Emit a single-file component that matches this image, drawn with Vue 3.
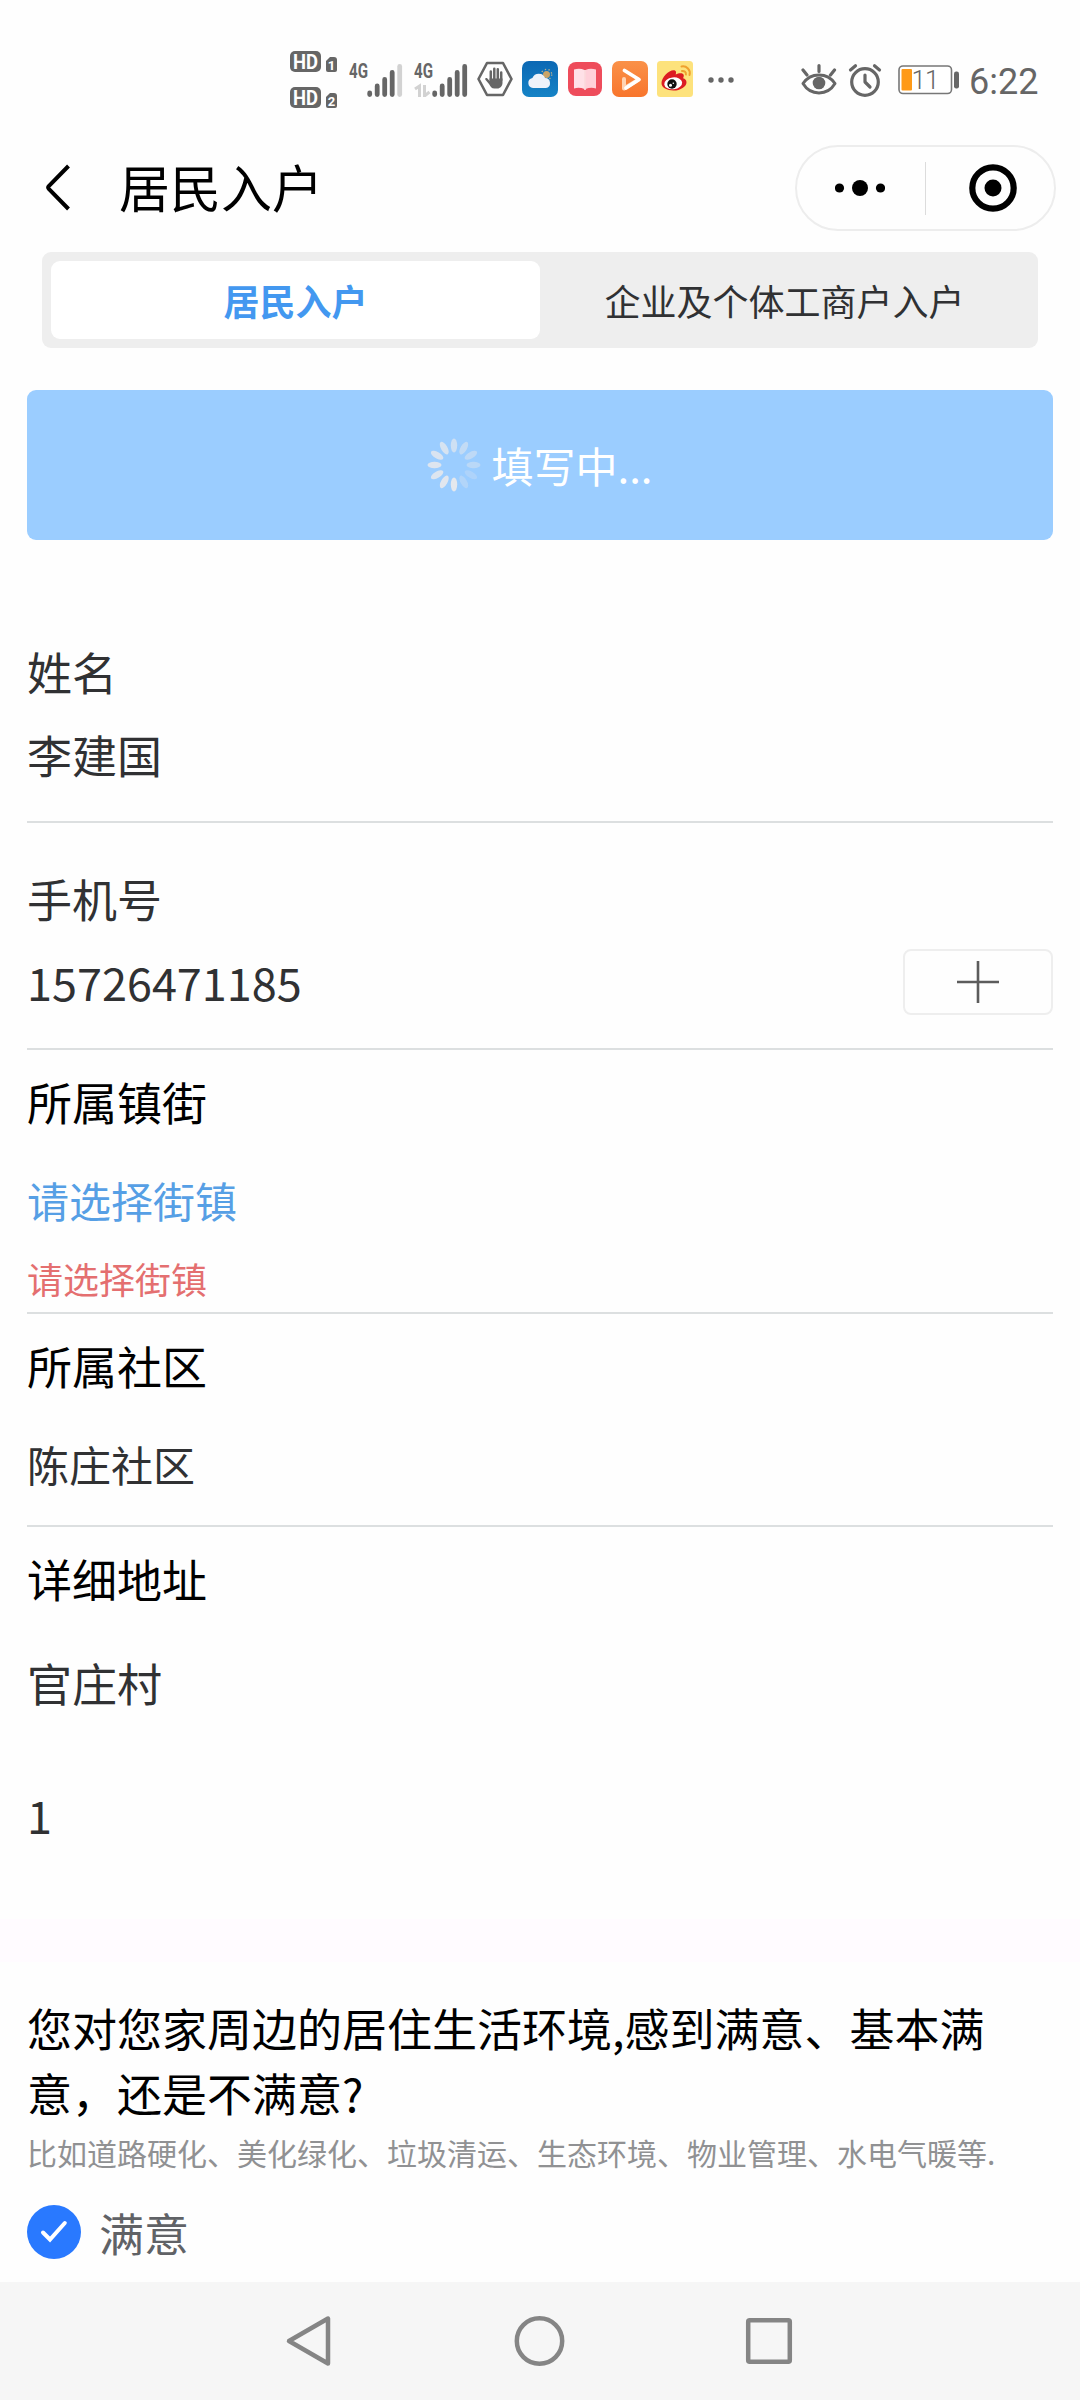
<template>
  <div class="page">
    <div class="status-bar">
      <!-- HD 1 / HD 2 -->
      <svg class="hd" width="50" height="60" viewBox="0 0 50 60">
        <g v-for="n in 2" :key="n" :transform="`translate(0 ${(n - 1) * 36})`">
          <rect x="0" y="1" width="31" height="21" rx="5" fill="#666" />
          <text x="3" y="18.500" font-size="20" font-weight="700" textLength="25" lengthAdjust="spacingAndGlyphs" fill="#fff">HD</text>
          <path d="M36 11l4-4h4q3 0 3 3v10q0 2-2 2h-7q-2 0-2-2z" fill="#666" />
          <text x="37.800" y="19.500" font-size="13" font-weight="700" fill="#fff">{{ n }}</text>
        </g>
      </svg>

      <svg class="signal" width="54" height="42" viewBox="0 -6 54 42">
        <text x="0" y="17" font-size="21" font-weight="700" textLength="19" lengthAdjust="spacingAndGlyphs" fill="#666">4G</text>
        <g stroke-width="4.8" stroke-linecap="round" stroke="#666">
          <path d="M20.7 32v1.6M28.2 25v8.6M35.7 18.5v15M43.2 11.5v22" />
          <path d="M50.7 5.5v28" stroke="#d2d2d2" />
        </g>
      </svg>

      <svg class="signal second" width="54" height="42" viewBox="0 -6 54 42">
        <text x="0" y="17" font-size="21" font-weight="700" textLength="19" lengthAdjust="spacingAndGlyphs" fill="#666">4G</text>
        <path d="M1 28l4.500-3v11M10.500 24v11l5-4" fill="none" stroke="#d2d2d2" stroke-width="3" />
        <g stroke-width="4.800" stroke-linecap="round" stroke="#666">
          <path d="M20.700 32v1.600M28.200 25v8.600M35.700 18.500v15M43.200 11.500v22M50.700 5.500v28" />
        </g>
      </svg>

      <svg class="hex" width="36" height="36" viewBox="0 0 36 36">
        <path d="M10 2h16l8.500 16-8.500 16H10L1.500 18z" fill="none" stroke="#666" stroke-width="2.600" stroke-linejoin="round" />
        <path d="M13.800 19V10.500M17.300 18V7.800M20.800 18V8.300M24.200 19V11.500" stroke="#666" stroke-width="2.500" stroke-linecap="round" />
        <path d="M12.500 17.500h13V22c0 3-2.500 5.500-5 5.500h-3c-3 0-4-2-5.500-4.500L8.400 18.700c-.8-1.500 1-2.200 2-1.200l2.300 2.500z" fill="#666" />
      </svg>

      <svg class="app weather" width="36" height="36" viewBox="0 0 36 36">
        <defs>
          <linearGradient id="sky" x1="0" y1="0" x2="0" y2="1">
            <stop offset="0" stop-color="#0c68b4" />
            <stop offset="1" stop-color="#1583c6" />
          </linearGradient>
        </defs>
        <rect width="36" height="36" rx="7" fill="url(#sky)" />
        <circle cx="24.500" cy="13.500" r="5.200" fill="none" stroke="#b5ae92" stroke-width="1.300" stroke-dasharray="1.300 2.400" />
        <circle cx="24.500" cy="13.500" r="3.500" fill="#c9a468" />
        <path d="M11 27a5 5 0 0 1-.6-9.900 6.800 6.800 0 0 1 12.700 0A5 5 0 0 1 24 27z" fill="#edf2fa" />
      </svg>

      <svg class="app book" width="34" height="34" viewBox="0 0 34 34">
        <rect width="34" height="34" rx="8" fill="#ee4c5b" />
        <path d="M6 7.500q6-1.500 10.500.5v19q-5-2-10.500-.6z" fill="#ffe1e7" />
        <path d="M28 7.500q-6-1.500-10.500.5v19q5-2 10.500-.6z" fill="#ffd0d9" />
        <path d="M17 8v20" stroke="#fff" stroke-width="1.300" />
      </svg>

      <svg class="app video" width="36" height="36" viewBox="0 0 36 36">
        <defs>
          <linearGradient id="orange" x1="0" y1="0" x2="0" y2="1">
            <stop offset="0" stop-color="#fa9148" />
            <stop offset="1" stop-color="#f8752c" />
          </linearGradient>
        </defs>
        <rect width="36" height="36" rx="7" fill="url(#orange)" />
        <path d="M12 18v9.500l14-8.500" fill="none" stroke="#ffd3b3" stroke-width="4" stroke-linejoin="round" stroke-linecap="round" />
        <path d="M12.500 9.500L27 18.500l-13 8.500" fill="none" stroke="#fff" stroke-width="3.800" stroke-linejoin="round" stroke-linecap="round" />
      </svg>

      <svg class="app weibo" width="36" height="36" viewBox="0 0 36 36">
        <rect width="36" height="36" rx="3.500" fill="#fde27c" />
        <path d="M4.500 22C4.500 16 13 8 17.500 9.300c2 .6 1.700 2.700 1.200 4.200 3-1.500 7.500-2 8 .5.300 1.300-.3 2.300-.6 3.200 2 .6 3.400 1.800 3.400 4 0 4.500-6 8.300-13 8.300-6.500 0-12-2.800-12-7.500z" fill="#dc1c22" />
        <ellipse cx="16.200" cy="22.300" rx="9" ry="5.900" transform="rotate(-7 16.200 22.300)" fill="#fff" />
        <circle cx="15" cy="23" r="4.700" fill="#111" />
        <circle cx="13.500" cy="24.200" r="1.500" fill="#fff" />
        <circle cx="16.300" cy="22.300" r=".8" fill="#fff" />
        <path d="M24.500 5.500c5-1 9.500 3.500 8 8.500M25 10c2.500-.3 4.200 1.200 3.900 3.500" fill="none" stroke="#efa12e" stroke-width="2" stroke-linecap="round" />
      </svg>

      <svg class="more" width="26" height="6" viewBox="0 0 26 6" fill="#666">
        <circle cx="3" cy="3" r="2.700" />
        <circle cx="13" cy="3" r="2.700" />
        <circle cx="23" cy="3" r="2.700" />
      </svg>

      <svg class="eye" width="36" height="34" viewBox="0 0 36 34" fill="none" stroke="#666" stroke-linecap="round">
        <path d="M2 20.500C9.500 9 26.500 9 34 20.500 26.500 33 9.500 33 2 20.500z" stroke-width="3" stroke-linejoin="round" />
        <path d="M18 2.500v6M2 7l4 5M33.500 7l-4 5" stroke-width="3.200" />
        <circle cx="18" cy="20" r="6.300" fill="#666" stroke="none" />
      </svg>

      <svg class="alarm" width="34" height="36" viewBox="0 0 34 36" fill="none" stroke="#666" stroke-linecap="round" stroke-linejoin="round">
        <circle cx="17" cy="20" r="13.300" stroke-width="3.200" />
        <path d="M17 13v7l5 5" stroke-width="3.200" />
        <path d="M2.500 8L7.500 3.800M31.500 8L26.500 3.800" stroke-width="3.200" />
      </svg>

      <svg class="battery" width="62" height="30" viewBox="0 0 62 30">
        <rect x="1" y="1" width="52.500" height="27.500" rx="4" fill="#fff" stroke="#777" stroke-width="1.600" />
        <rect x="3.500" y="4" width="10.500" height="21.500" rx="1" fill="#ff9a17" />
        <text x="13.500" y="24" font-family="Roboto" font-weight="300" font-size="26" textLength="28" fill="#666">11</text>
        <rect x="56" y="6.500" width="5" height="17" rx="2.200" fill="#666" />
      </svg>
      <span class="time">6:22</span>
    </div>

    <div class="nav-bar">
      <svg class="back" width="26" height="50" viewBox="0 0 26 50">
        <path d="M23.500 3L3.800 23.200q-1.200 1.300 0 2.600L23.500 46" fill="none" stroke="#000" stroke-width="4" />
      </svg>
      <h1 class="title">{{ title }}</h1>
      <div class="capsule">
        <svg class="menu" width="50" height="16" viewBox="0 0 50 16">
          <circle cx="4.500" cy="8" r="4.600" />
          <circle cx="25" cy="8" r="8" />
          <circle cx="45.500" cy="8" r="4.600" />
        </svg>
        <span class="divider"></span>
        <svg class="target" width="48" height="48" viewBox="0 0 48 48">
          <circle cx="24" cy="24" r="20.700" fill="none" stroke="#000" stroke-width="6.200" />
          <circle cx="24" cy="24" r="8.500" />
        </svg>
      </div>
    </div>

    <div class="tabs">
      <div
        v-for="(tab, i) in tabs"
        :key="tab"
        class="tab"
        :class="{ active: current === i }"
        @click="current = i"
      >{{ tab }}</div>
    </div>

    <div class="submit">
      <svg class="spinner" width="54" height="54" viewBox="-27 -27 54 54">
        <ellipse
          v-for="n in 12"
          :key="n"
          cx="0"
          cy="-19.500"
          rx="3.200"
          ry="7"
          fill="#e9e9ec"
          :opacity="petals[n - 1]"
          :transform="`rotate(${(n - 1) * 30})`"
        />
      </svg>
      <span>填写中...</span>
    </div>

    <div class="form">
      <div class="field name">
        <div class="label">姓名</div>
        <div class="value">{{ form.name }}</div>
      </div>

      <div class="field phone">
        <div class="label">手机号</div>
        <div class="row">
          <div class="value">{{ form.phone }}</div>
          <div class="add">
            <svg width="42" height="42" viewBox="0 0 42 42">
              <path d="M21 0v42M0 21h42" stroke="#5c5c5c" stroke-width="2.600" />
            </svg>
          </div>
        </div>
      </div>

      <div class="field street">
        <div class="label dark">所属镇街</div>
        <div class="value picker">请选择街镇</div>
        <div class="error">请选择街镇</div>
      </div>

      <div class="field community">
        <div class="label dark">所属社区</div>
        <div class="value small">{{ form.community }}</div>
      </div>

      <div class="field address">
        <div class="label dark">详细地址</div>
        <div class="value">{{ form.village }}</div>
        <div class="value number">{{ form.number }}</div>
      </div>
    </div>

    <div class="gap"></div>

    <div class="survey">
      <div class="question">您对您家周边的居住生活环境,感到满意、基本满意，还是不满意?</div>
      <div class="hint">比如道路硬化、美化绿化、垃圾清运、生态环境、物业管理、水电气暖等.</div>
      <div class="option">
        <svg width="54" height="54" viewBox="0 0 54 54">
          <circle cx="27" cy="27" r="27" fill="#2979ff" />
          <path d="M16 27.500l7 7L37.800 18" fill="none" stroke="#fff" stroke-width="4" stroke-linecap="round" />
        </svg>
        <span>满意</span>
      </div>
    </div>

    <div class="system-nav">
      <svg width="50" height="56" viewBox="0 0 50 56">
        <path d="M44 5.500v45L5 28z" />
      </svg>
      <svg width="56" height="56" viewBox="0 0 56 56">
        <circle cx="29.500" cy="28" r="22.700" />
      </svg>
      <svg width="56" height="56" viewBox="0 0 56 56">
        <rect x="7.200" y="7.200" width="41.600" height="41.600" rx="1.500" />
      </svg>
    </div>
  </div>
</template>

<script setup>
import { ref } from 'vue';

const title = '居民入户';
const tabs = ['居民入户', '企业及个体工商户入户'];
const current = ref(0);

const form = ref({
  name: '李建国',
  phone: '15726471185',
  community: '陈庄社区',
  village: '官庄村',
  number: '1',
});

// độ mờ của từng cánh, theo chiều kim đồng hồ
const petals = [0.65, 0.5, 0.45, 0.4, 0.25, 0.3, 0.95, 0.9, 0.85, 0.85, 0.8, 0.75];
</script>

<style>
body {
  margin: 0;
  background: #fff;
}
</style>

<style scoped>
.page {
  display: flex;
  flex-direction: column;
  width: 1080px;
  height: 2400px;
  overflow: hidden;
  background: #fefefe;
  color: #303133;
  font-family: "Noto Sans CJK SC", sans-serif;
}
svg {
  display: block;
  flex-shrink: 0;
}

/* status bar */
.status-bar {
  display: flex;
  align-items: flex-start;
  box-sizing: border-box;
  height: 130px;
  padding: 50px 0 0 290px;
}
.status-bar text {
  font-family: Roboto, sans-serif;
}
.signal {
  margin: 5px 0 0 9px;
}
.signal.second {
  margin-left: 11px;
}
.hex {
  margin: 11px 0 0 9px;
}
.app {
  margin: 11px 0 0 9px;
}
.book {
  margin: 12px 0 0 10px;
}
.video {
  margin-left: 10px;
}
.more {
  margin: 27px 0 0 15px;
}
.eye {
  margin: 13px 0 0 67px;
}
.alarm {
  margin: 12px 0 0 11px;
}
.battery {
  margin: 15px 0 0 16px;
}
.time {
  margin: 11px 0 0 9px;
  font-family: Roboto, sans-serif;
  font-size: 36px;
  line-height: 42px;
  color: #666;
}

/* title */
.nav-bar {
  display: flex;
  align-items: center;
  box-sizing: border-box;
  height: 116px;
  padding: 0 24px 0 45px;
}
.title {
  flex: 1;
  margin: 0 0 5px 48px;
  font-size: 51px;
  line-height: 70px;
  font-weight: 400;
  color: #000;
}
.capsule {
  display: flex;
  align-items: center;
  box-sizing: border-box;
  width: 261px;
  height: 86px;
  padding-left: 38px;
  border: 2px solid #ededed;
  border-radius: 43px;
}
.divider {
  width: 1px;
  height: 53px;
  margin: 0 43px 0 40px;
  background: #dcdcdc;
}

/* tabs */
.tabs {
  display: flex;
  box-sizing: border-box;
  width: 996px;
  height: 96px;
  margin: 6px 42px 0;
  padding: 9px;
  border-radius: 9px;
  background: #eee;
}
.tab {
  flex: 1;
  border-radius: 9px;
  font-size: 36px;
  line-height: 78px;
  text-align: center;
}
.tab.active {
  background: #fff;
  color: #4398f0;
  font-weight: 700;
}

.submit {
  display: flex;
  align-items: center;
  justify-content: center;
  height: 150px;
  margin: 42px 27px 0;
  border-radius: 9px;
  background: #9bcdff;
  color: #fff;
  font-size: 42px;
  line-height: 60px;
}
.spinner {
  margin-right: 10px;
}

/* form */
.form {
  height: 1379px;
  padding: 0 27px;
}
.field {
  box-sizing: border-box;
  border-bottom: 2px solid #dcdfe0;
}
.label,
.value {
  font-size: 45px;
  line-height: 64px;
}
.label.dark {
  color: #000;
}
.name {
  height: 283px;
  padding-top: 100px;
}
.name .value {
  margin-top: 19px;
}
.phone {
  height: 227px;
  padding-top: 44px;
}
.row {
  display: flex;
  align-items: center;
  justify-content: space-between;
  margin-top: 18px;
}
.add {
  display: flex;
  align-items: center;
  justify-content: center;
  box-sizing: border-box;
  width: 150px;
  height: 66px;
  border: 2px solid #eee;
  border-radius: 8px;
}
.street {
  height: 264px;
  padding-top: 20px;
}
.value.picker {
  margin-top: 34px;
  font-size: 42px;
  color: #569fe5;
}
.error {
  margin-top: 21px;
  font-size: 36px;
  line-height: 50px;
  color: #e46f70;
}
.community {
  height: 213px;
  padding-top: 20px;
}
.value.small {
  margin-top: 34px;
  font-size: 42px;
}
.address {
  padding-top: 20px;
  border-bottom: none;
}
.address .value {
  margin-top: 40px;
}
.address .number {
  margin-top: 68px;
}

.gap {
  height: 43px;
  background: #fffbff;
}

/* survey */
.survey {
  box-sizing: border-box;
  height: 320px;
  padding: 33px 27px 0;
}
.question {
  font-size: 45px;
  line-height: 65px;
  color: #000;
}
.hint {
  margin-top: 5px;
  font-size: 30px;
  line-height: 44px;
  color: #909193;
  white-space: nowrap;
}
.option {
  display: flex;
  align-items: center;
  height: 54px;
  margin-top: 31px;
  font-size: 45px;
  color: #606266;
}
.option span {
  margin: 2px 0 0 18px;
  line-height: 54px;
}

.system-nav {
  display: flex;
  align-items: center;
  justify-content: space-between;
  box-sizing: border-box;
  height: 118px;
  padding: 0 283px 0 284px;
  background: #f6f6f6;
}
.system-nav svg {
  fill: none;
  stroke: #858585;
  stroke-width: 4.500;
  stroke-linejoin: round;
}
</style>
